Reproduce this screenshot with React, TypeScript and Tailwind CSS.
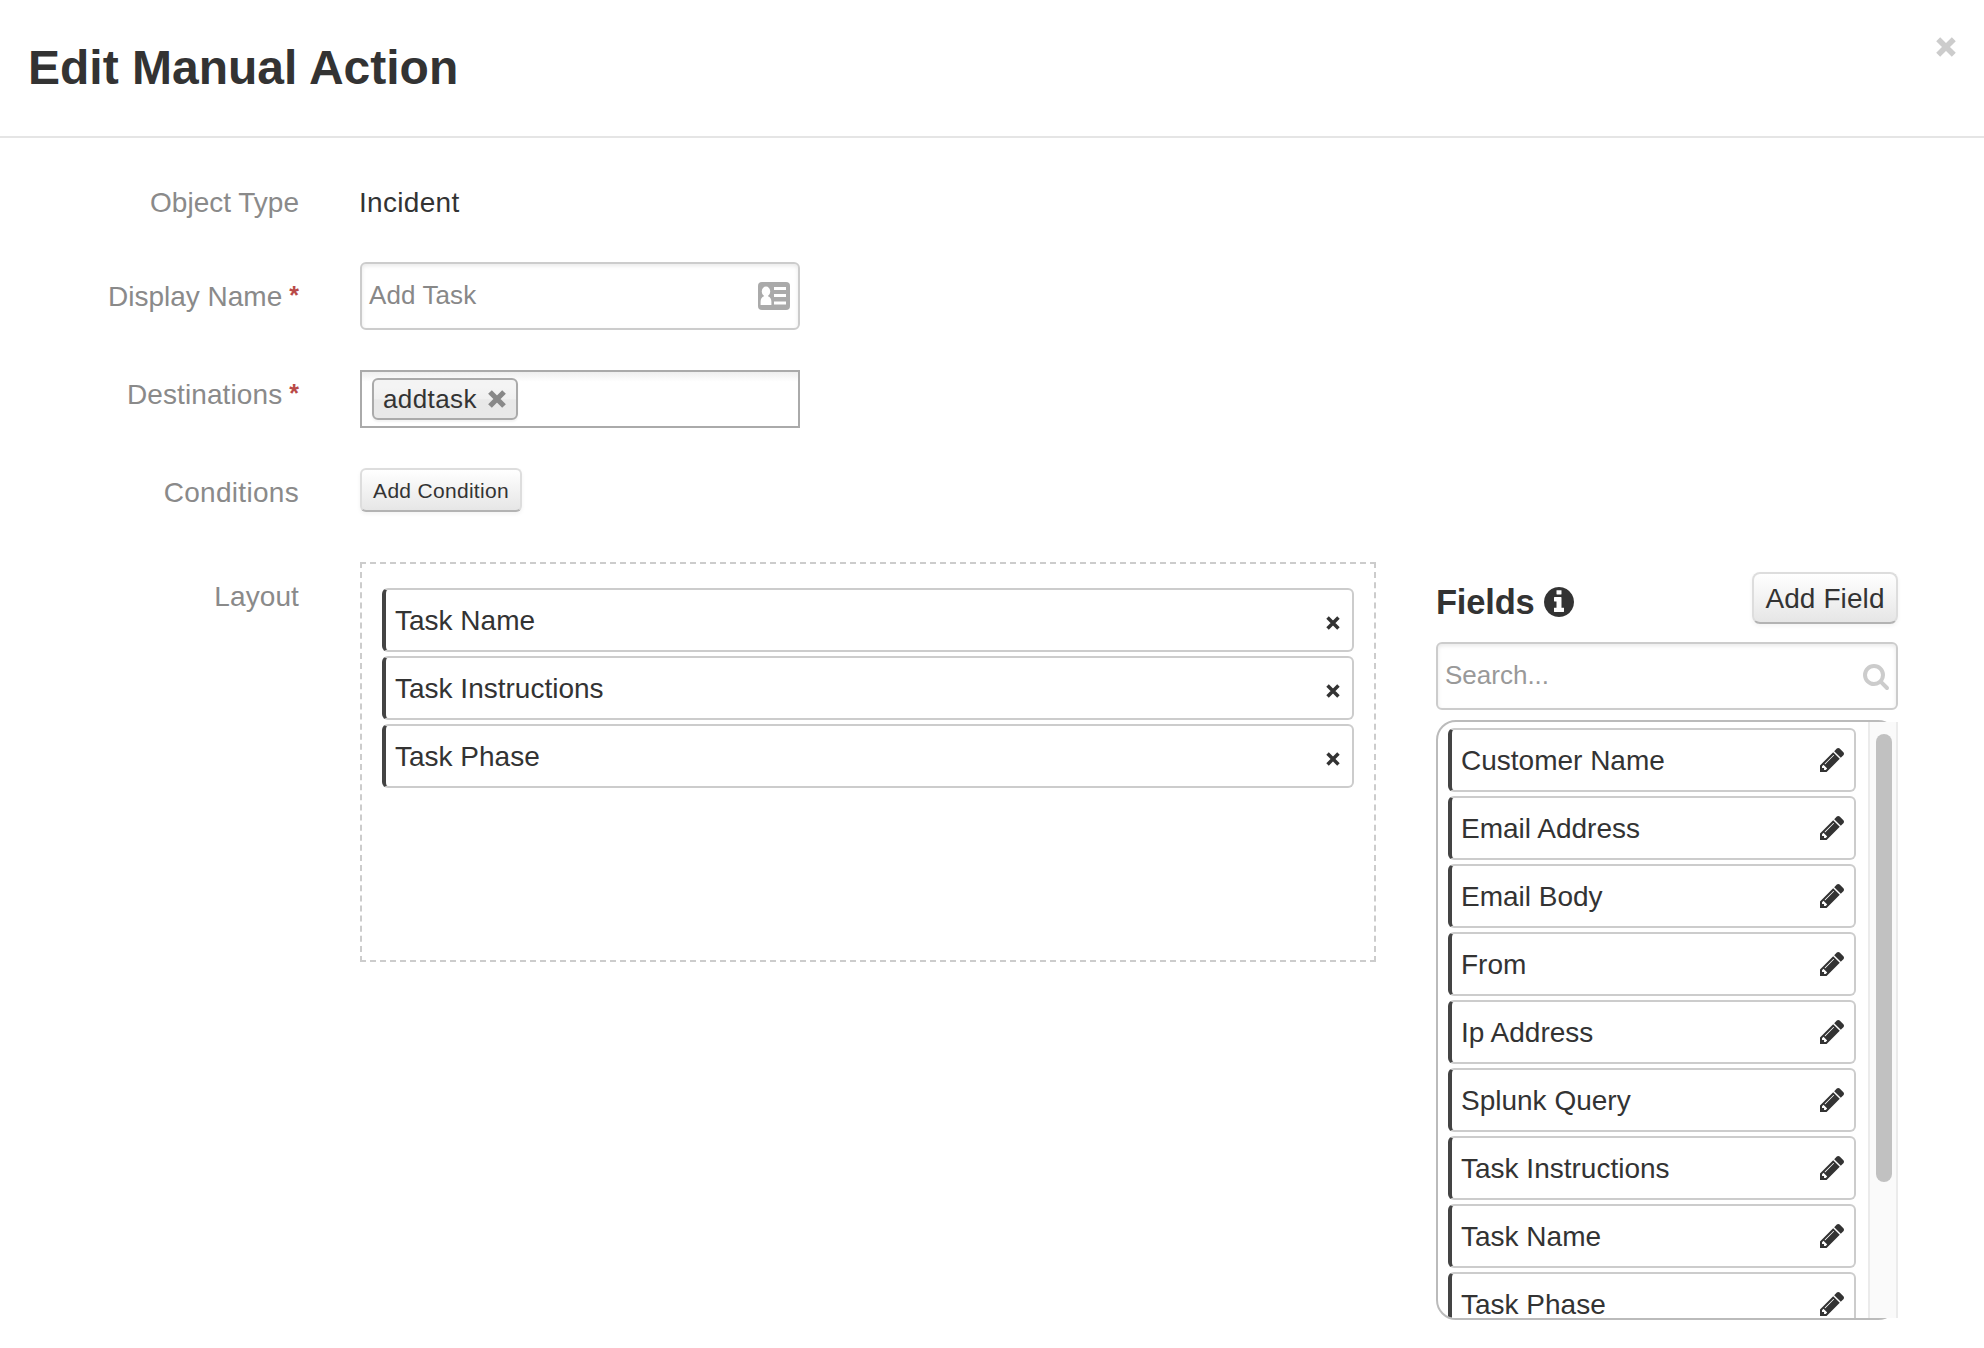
import type { ReactNode } from "react";

const PENCIL =
  "M363 1408l91-91-235-235-91 91v107h128v128h107zm523-928q0-22-22-22-10 0-17 7l-542 542q-7 7-7 17 0 22 22 22 10 0 17-7l542-542q7-7 7-17zm-54-192l416 416-832 832h-416v-416zm683 96q0 53-37 90l-166 166-416-416 166-165q36-38 90-38 53 0 91 38l235 234q37 39 37 91z";
const SEARCH =
  "M1216 832q0-185-131.5-316.5t-316.5-131.5-316.5 131.5-131.5 316.5 131.5 316.5 316.5 131.5 316.5-131.5 131.5-316.5zm512 832q0 52-38 90t-90 38q-54 0-90-38l-343-342q-179 124-399 124-143 0-273.5-55.5t-225-150-150-225-55.5-273.5 55.5-273.5 150-225 225-150 273.5-55.5 273.5 55.5 225 150 150 225 55.5 273.5q0 220-124 399l343 343q37 37 37 90z";
const INFO =
  "M1152 1376v-160q0-14-9-23t-23-9h-96v-512q0-14-9-23t-23-9h-320q-14 0-23 9t-9 23v160q0 14 9 23t23 9h96v320h-96q-14 0-23 9t-9 23v160q0 14 9 23t23 9h448q14 0 23-9t9-23zm-128-896v-160q0-14-9-23t-23-9h-192q-14 0-23 9t-9 23v160q0 14 9 23t23 9h192q14 0 23-9t9-23zm640 416q0 209-103 385.5t-279.5 279.5-385.5 103-385.5-103-279.5-279.5-103-385.5 103-385.5 279.5-279.5 385.5-103 385.5 103 279.5 279.5 103 385.5z";

function Cross({ className, width }: { className: string; width: number }) {
  return (
    <svg viewBox="0 0 20 20" className={className} fill="none" stroke="currentColor" strokeWidth={width}>
      <path d="M2.2 2.2L17.8 17.8M17.8 2.2L2.2 17.8" />
    </svg>
  );
}

function CardIcon() {
  return (
    <svg viewBox="0 0 32 28" className="h-7 w-8 shrink-0">
      <rect width="32" height="28" rx="4" fill="#aaa" />
      <g fill="#fff">
        <ellipse cx="8" cy="9.5" rx="4.2" ry="5" />
        <path d="M6 13h4v1.200c2.200 .6 3.400 2.800 3.400 5.500v3.300H2.600v-3.300c0-2.700 1.200-4.900 3.400-5.500z" />
        <rect x="16" y="5" width="12" height="3" />
        <rect x="16" y="12" width="12" height="3" />
        <rect x="16" y="19.500" width="12" height="3" />
      </g>
    </svg>
  );
}

function Label({
  children,
  required = false,
  tracking = "tracking-normal",
}: {
  children: string;
  required?: boolean;
  tracking?: string;
}) {
  return (
    <div className={`flex w-[299px] shrink-0 justify-end gap-[7px] text-[28px] leading-8 text-[#8a8a8a] ${tracking}`}>
      <span>{children}</span>
      {required && <span className="-mt-0.5 text-[25px] font-bold tracking-normal text-[#b94a48]">*</span>}
    </div>
  );
}

function Item({ name, children }: { name: string; children: ReactNode }) {
  return (
    <li className="flex h-16 shrink-0 items-center justify-between rounded-[6px] border-2 border-l-4 border-[#ccc] border-l-[#444] bg-white pl-[9px] text-[28px] leading-8 text-[#333]">
      <span className="mt-0.5">{name}</span>
      {children}
    </li>
  );
}

const layoutItems = ["Task Name", "Task Instructions", "Task Phase"];
const fields = [
  "Customer Name",
  "Email Address",
  "Email Body",
  "From",
  "Ip Address",
  "Splunk Query",
  "Task Instructions",
  "Task Name",
  "Task Phase",
];

export default function App() {
  return (
    <div className="h-[1348px] w-[1984px] overflow-hidden bg-white font-['Liberation_Sans',Arial,sans-serif] text-[#333]">
      <header className="flex h-[138px] items-start justify-between border-b-2 border-[#e5e5e5] pr-7 pl-7">
        <h1 className="mt-10 text-[48px] leading-[56px] font-bold">Edit Manual Action</h1>
        <button aria-label="Close" className="mt-[37px] text-[#ccc]">
          <Cross className="h-5 w-5" width={5.6} />
        </button>
      </header>

      <div className="flex pt-[49px]">
        <Label>Object Type</Label>
        <div className="ml-[60px] text-[28px] leading-8 tracking-[0.3px]">Incident</div>
      </div>

      <div className="mt-[43px] flex">
        <div className="pt-[19px]">
          <Label required>Display Name</Label>
        </div>
        <div className="ml-[61px] flex h-[68px] w-[440px] items-center justify-between rounded-[6px] border-2 border-[#ccc] pr-2 pl-[7px] shadow-[inset_0_2px_4px_rgba(0,0,0,0.09)]">
          <span className="-mt-[3px] text-[26px] leading-8 tracking-[0.1px] text-[#888]">Add Task</span>
          <CardIcon />
        </div>
      </div>

      <div className="mt-10 flex">
        <div className="pt-[9px]">
          <Label required tracking="tracking-[0.1px]">
            Destinations
          </Label>
        </div>
        <div className="ml-[61px] h-[58px] w-[440px] border-2 border-[#aaa] bg-linear-to-b from-[#eee] to-white to-[18%] pt-[6px] pl-[10px]">
          <div className="flex h-[42px] w-[146px] items-center justify-between rounded-[6px] border-2 border-[#aaa] bg-linear-to-b from-[#f4f4f4] from-20% via-[#f0f0f0] via-50% to-[#e8e8e8] to-52% pr-[10px] pl-[9px] shadow-[0_2px_2px_rgba(0,0,0,0.05)]">
            <span className="text-[26px] leading-8 tracking-[0.4px]">addtask</span>
            <Cross className="h-[18px] w-[18px] text-[#888]" width={5.8} />
          </div>
        </div>
      </div>

      <div className="mt-10 flex">
        <div className="pt-[9px]">
          <Label tracking="tracking-[0.3px]">Conditions</Label>
        </div>
        <button className="ml-[61px] h-11 w-[162px] rounded-[6px] border-2 border-[#ddd] border-b-[#b3b3b3] bg-linear-to-b from-white to-[#e6e6e6] text-[21px] leading-6 tracking-[0.3px] shadow-[0_2px_4px_rgba(0,0,0,0.05)]">
          <span className="mt-px block">Add Condition</span>
        </button>
      </div>

      <div className="mt-[50px] flex">
        <div className="pt-[19px]">
          <Label tracking="tracking-[0.1px]">Layout</Label>
        </div>
        <ul className="ml-[61px] flex h-[400px] w-[1016px] flex-col gap-1 border-2 border-dashed border-[#ccc] px-5 pt-6">
          {layoutItems.map((name) => (
            <Item key={name} name={name}>
              <button aria-label="Remove" className="mt-[5px] mr-3">
                <Cross className="h-[14px] w-[14px]" width={5} />
              </button>
            </Item>
          ))}
        </ul>

        <section className="ml-[60px] w-[462px] pt-[10px]">
          <div className="flex items-start justify-between">
            <h2 className="flex items-center gap-[9px] text-[34.500px] leading-10 font-bold tracking-[-0.2px]">
              <span className="mt-[10px]">Fields</span>
              <svg viewBox="128 128 1536 1536" className="mt-[10px] h-[30px] w-[30px]" fill="currentColor">
                <path d={INFO} />
              </svg>
            </h2>
            <button className="h-[52px] w-[146px] rounded-[8px] border-2 border-[#ddd] border-b-[#b3b3b3] bg-linear-to-b from-white to-[#e6e6e6] text-[28px] leading-8 shadow-[0_2px_4px_rgba(0,0,0,0.05)]">
              <span className="mt-px block tracking-[0.1px]">Add Field</span>
            </button>
          </div>
          <div className="mt-[18px] flex h-[68px] items-center justify-between rounded-[6px] border-2 border-[#ccc] pr-[7px] pl-[7px] shadow-[inset_0_2px_4px_rgba(0,0,0,0.09)]">
            <span className="-mt-[3px] text-[26px] leading-8 text-[#999]">Search...</span>
            <svg viewBox="64 128 1664 1664" className="mt-0.5 h-[26px] w-[26px] text-[#ccc]" fill="currentColor">
              <path d={SEARCH} />
            </svg>
          </div>
          <div className="relative mt-[10px]">
            <ul className="flex h-[600px] flex-col gap-1 overflow-hidden rounded-[20px] border-2 border-[#bbb] pt-[6px] pr-10 pl-[10px]">
              {fields.map((name) => (
                <Item key={name} name={name}>
                  <svg viewBox="0 21 1515 1515" className="mr-[10px] h-6 w-6" fill="currentColor">
                    <path d={PENCIL} />
                  </svg>
                </Item>
              ))}
            </ul>
            <div className="absolute top-0.5 right-0 h-[596px] w-[30px] border-x-2 border-x-[#ebebeb] bg-[#fafafa] px-[6px] pt-3 pr-1">
              <div className="h-[448px] w-4 rounded-full bg-[#c1c1c1]" />
            </div>
          </div>
        </section>
      </div>
    </div>
  );
}
